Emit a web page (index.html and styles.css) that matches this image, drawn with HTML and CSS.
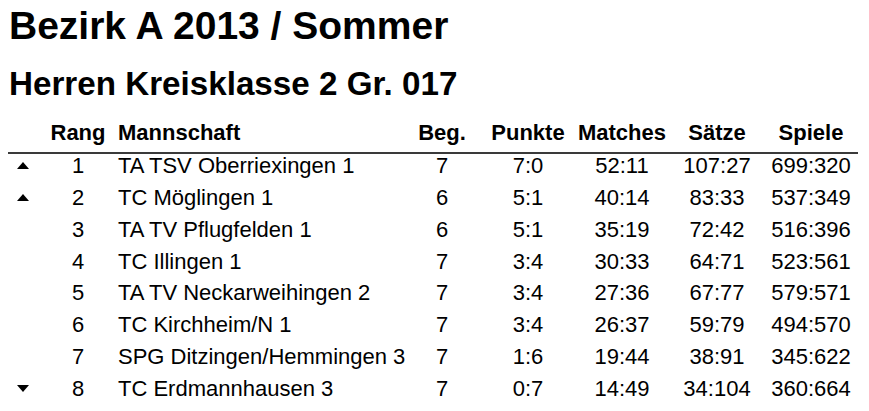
FILE: index.html
```html
<!DOCTYPE html>
<html lang="de">
<head>
<meta charset="utf-8">
<title>Bezirk A 2013 / Sommer</title>
<link rel="stylesheet" href="styles.css">
</head>
<body>
<div class="page">
  <h1 class="title">Bezirk A 2013 / Sommer</h1>
  <h2 class="subtitle">Herren Kreisklasse 2 Gr. 017</h2>
  <table class="standings">
    <colgroup>
      <col class="c-trend">
      <col class="c-rang">
      <col class="c-team">
      <col class="c-beg">
      <col class="c-punkte">
      <col class="c-matches">
      <col class="c-saetze">
      <col class="c-spiele">
    </colgroup>
    <thead>
      <tr>
        <th></th>
        <th>Rang</th>
        <th class="left">Mannschaft</th>
        <th>Beg.</th>
        <th>Punkte</th>
        <th>Matches</th>
        <th>Sätze</th>
        <th>Spiele</th>
      </tr>
    </thead>
    <tbody>
      <tr>
        <td><svg class="arrow" width="12" height="7" viewBox="0 0 12 7"><polygon points="6,0 12,7 0,7"/></svg></td>
        <td>1</td><td class="left">TA TSV Oberriexingen 1</td><td>7</td><td>7:0</td><td>52:11</td><td>107:27</td><td>699:320</td>
      </tr>
      <tr>
        <td><svg class="arrow" width="12" height="7" viewBox="0 0 12 7"><polygon points="6,0 12,7 0,7"/></svg></td>
        <td>2</td><td class="left">TC Möglingen 1</td><td>6</td><td>5:1</td><td>40:14</td><td>83:33</td><td>537:349</td>
      </tr>
      <tr>
        <td></td>
        <td>3</td><td class="left">TA TV Pflugfelden 1</td><td>6</td><td>5:1</td><td>35:19</td><td>72:42</td><td>516:396</td>
      </tr>
      <tr>
        <td></td>
        <td>4</td><td class="left">TC Illingen 1</td><td>7</td><td>3:4</td><td>30:33</td><td>64:71</td><td>523:561</td>
      </tr>
      <tr>
        <td></td>
        <td>5</td><td class="left">TA TV Neckarweihingen 2</td><td>7</td><td>3:4</td><td>27:36</td><td>67:77</td><td>579:571</td>
      </tr>
      <tr>
        <td></td>
        <td>6</td><td class="left">TC Kirchheim/N 1</td><td>7</td><td>3:4</td><td>26:37</td><td>59:79</td><td>494:570</td>
      </tr>
      <tr>
        <td></td>
        <td>7</td><td class="left">SPG Ditzingen/Hemmingen 3</td><td>7</td><td>1:6</td><td>19:44</td><td>38:91</td><td>345:622</td>
      </tr>
      <tr>
        <td><svg class="arrow" width="12" height="7" viewBox="0 0 12 7"><polygon points="0,0 12,0 6,7"/></svg></td>
        <td>8</td><td class="left">TC Erdmannhausen 3</td><td>7</td><td>0:7</td><td>14:49</td><td>34:104</td><td>360:664</td>
      </tr>
    </tbody>
  </table>
</div>
</body>
</html>
```

FILE: styles.css
```css
html, body {
  margin: 0;
  padding: 0;
  background: #ffffff;
}

.page {
  padding: 4px 8px 0 8px;
  font-family: "Liberation Sans", Arial, Helvetica, sans-serif;
  color: #000000;
}

.title {
  margin: 0 0 17px 0;
  font-size: 39px;
  line-height: 44px;
  font-weight: bold;
  padding-left: 1px;
}

.subtitle {
  margin: 0 0 18px 0;
  font-size: 33.2px;
  line-height: 38px;
  font-weight: bold;
  padding-left: 1px;
}

.standings {
  border-collapse: collapse;
  table-layout: fixed;
  width: 850px;
  font-size: 22px;
}

.c-trend { width: 30px; }
.c-rang { width: 80px; }
.c-team { width: 284px; }
.c-beg { width: 80px; }
.c-punkte { width: 92px; }
.c-matches { width: 96px; }
.c-saetze { width: 94px; }
.c-spiele { width: 94px; }

.standings th,
.standings td {
  padding: 0 0 8px 0;
  line-height: 24px;
  text-align: center;
  white-space: nowrap;
  vertical-align: top;
}

.standings td {
  padding-bottom: 7.85px;
}

.standings th {
  font-weight: bold;
  padding-bottom: 7px;
  border-bottom: 2px solid #3a3a3a;
}

.standings .left {
  text-align: left;
}

.arrow {
  display: block;
  margin: 8px auto 0 auto;
  fill: #000000;
}
```
